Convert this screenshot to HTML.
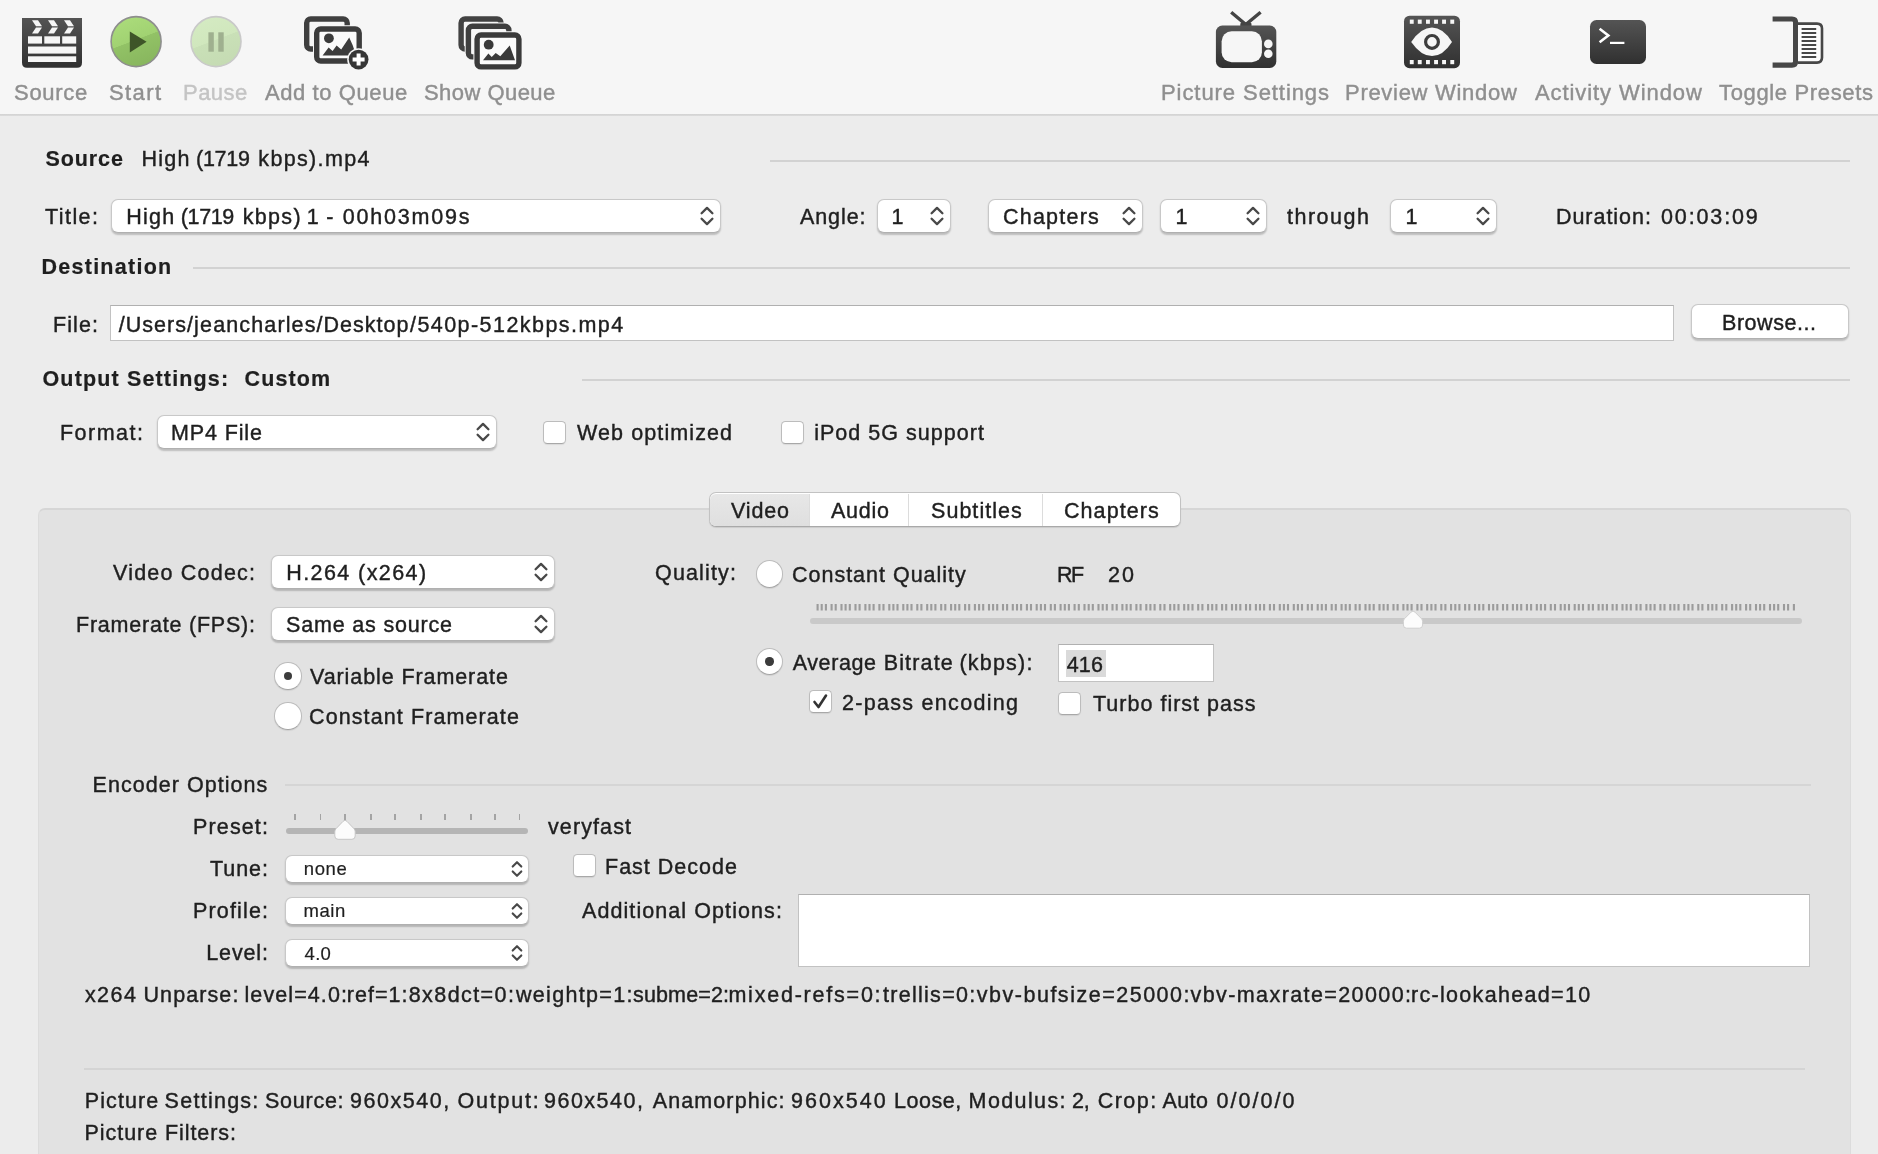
<!DOCTYPE html>
<html><head><meta charset=utf-8><title>HandBrake</title><style>
html,body{margin:0;padding:0;width:1878px;height:1154px;overflow:hidden}
body{width:1878px;height:1154px;overflow:hidden;background:#ececec;position:relative;font-family:"Liberation Sans", sans-serif;color:#1f1f1f}
#clip{position:absolute;left:0;top:0;width:1878px;height:1154px;overflow:hidden}
#w{position:absolute;left:-8px;top:-8px;width:1894px;height:1170px;overflow:hidden;background:#ececec;filter:blur(0.5px)}
#c{position:absolute;left:8px;top:8px;width:1878px;height:1154px}
.abs{position:absolute}
.t{position:absolute;white-space:pre;-webkit-text-stroke:0.42px currentColor}
.pop{position:absolute;box-sizing:border-box;background:#fff;border:1.4px solid #c8c8c8;border-bottom-color:#b0b0b0;border-radius:7px;box-shadow:0 1.2px 1.6px rgba(0,0,0,.2)}
.tf{position:absolute;box-sizing:border-box;background:#fff;border:1.8px solid #c2c2c2;border-top-color:#b0b0b0}
.cb{position:absolute;box-sizing:border-box;width:23px;height:23px;background:#fff;border:1px solid #bcbcbc;border-bottom-color:#a8a8a8;border-radius:4.5px;box-shadow:0 1px 1px rgba(0,0,0,.08)}
.rd{position:absolute;box-sizing:border-box;width:27.4px;height:27.4px;background:#fff;border:1px solid #bcbcbc;border-bottom-color:#a6a6a6;border-radius:50%;box-shadow:0 1px 1px rgba(0,0,0,.08)}
.seg{position:absolute;box-sizing:border-box;background:#fff;border:1px solid #c2c2c2;border-bottom-color:#a9a9a9;border-radius:7px;box-shadow:0 1px 1px rgba(0,0,0,.10)}
</style></head><body><div id=clip><div id=w><div id=c>
<div class=abs style='left:-8px;top:-8px;width:1894px;height:122.5px;background:#f6f6f6'></div>
<div class=abs style='left:-8px;top:114px;width:1894px;height:2px;background:linear-gradient(#d2d2d2,#dcdcdc)'></div>
<div class=abs style='left:770px;top:160px;width:1080px;height:2px;background:#d2d2d2'></div>
<div class=abs style='left:193px;top:267px;width:1657px;height:2px;background:#d2d2d2'></div>
<div class=abs style='left:582px;top:379px;width:1268px;height:2px;background:#d2d2d2'></div>
<div class=abs style='left:38px;top:507.5px;width:1812.5px;height:700px;background:#e2e2e2;border:1.8px solid #dcdcdc;border-top:2.2px solid #d6d6d6;border-radius:7px;box-sizing:border-box'></div>
<div class=pop style='left:111px;top:199px;width:610px;height:33.80000000000001px'></div>
<svg class=abs style='left:698.7px;top:203.8px' width=16 height=24 viewBox='0 0 16 24'><path d='M2.6 9.3 L8 3.9 L13.4 9.3 M2.6 14.7 L8 20.1 L13.4 14.7' fill=none stroke='#484848' stroke-width=2.3 stroke-linecap=round stroke-linejoin=round /></svg>
<div class=pop style='left:877px;top:199px;width:74px;height:33.80000000000001px'></div>
<svg class=abs style='left:928.7px;top:203.8px' width=16 height=24 viewBox='0 0 16 24'><path d='M2.6 9.3 L8 3.9 L13.4 9.3 M2.6 14.7 L8 20.1 L13.4 14.7' fill=none stroke='#484848' stroke-width=2.3 stroke-linecap=round stroke-linejoin=round /></svg>
<div class=pop style='left:988px;top:199px;width:155px;height:33.80000000000001px'></div>
<svg class=abs style='left:1120.7px;top:203.8px' width=16 height=24 viewBox='0 0 16 24'><path d='M2.6 9.3 L8 3.9 L13.4 9.3 M2.6 14.7 L8 20.1 L13.4 14.7' fill=none stroke='#484848' stroke-width=2.3 stroke-linecap=round stroke-linejoin=round /></svg>
<div class=pop style='left:1160px;top:199px;width:107px;height:33.80000000000001px'></div>
<svg class=abs style='left:1244.7px;top:203.8px' width=16 height=24 viewBox='0 0 16 24'><path d='M2.6 9.3 L8 3.9 L13.4 9.3 M2.6 14.7 L8 20.1 L13.4 14.7' fill=none stroke='#484848' stroke-width=2.3 stroke-linecap=round stroke-linejoin=round /></svg>
<div class=pop style='left:1390px;top:199px;width:107px;height:33.80000000000001px'></div>
<svg class=abs style='left:1474.7px;top:203.8px' width=16 height=24 viewBox='0 0 16 24'><path d='M2.6 9.3 L8 3.9 L13.4 9.3 M2.6 14.7 L8 20.1 L13.4 14.7' fill=none stroke='#484848' stroke-width=2.3 stroke-linecap=round stroke-linejoin=round /></svg>
<div class=tf style='left:109.6px;top:304.6px;width:1564px;height:36.8px'></div>
<div class=pop style='left:1690.7px;top:304.4px;width:158.4px;height:34.4px'></div>
<div class=pop style='left:157px;top:415px;width:340px;height:33.80000000000001px'></div>
<svg class=abs style='left:474.7px;top:419.79999999999995px' width=16 height=24 viewBox='0 0 16 24'><path d='M2.6 9.3 L8 3.9 L13.4 9.3 M2.6 14.7 L8 20.1 L13.4 14.7' fill=none stroke='#484848' stroke-width=2.3 stroke-linecap=round stroke-linejoin=round /></svg>
<div class=cb style='left:542.8px;top:420.6px'></div>
<div class=cb style='left:780.5px;top:420.6px'></div>
<div class=seg style='left:709.2px;top:492.3px;width:472px;height:34.4px'></div>
<div class=abs style='left:710.4px;top:493.5px;width:99px;height:32px;background:linear-gradient(#e7e7e7,#dfdfdf);border-radius:6px 0 0 6px'></div>
<div class=abs style='left:808.6px;top:493.5px;width:1.5px;height:32.5px;background:#dcdcdc'></div>
<div class=abs style='left:907.8px;top:493.5px;width:1.5px;height:32.5px;background:#dcdcdc'></div>
<div class=abs style='left:1041.8px;top:493.5px;width:1.5px;height:32.5px;background:#dcdcdc'></div>
<div class=pop style='left:271px;top:555px;width:284px;height:33.799999999999955px'></div>
<svg class=abs style='left:532.7px;top:559.8px' width=16 height=24 viewBox='0 0 16 24'><path d='M2.6 9.3 L8 3.9 L13.4 9.3 M2.6 14.7 L8 20.1 L13.4 14.7' fill=none stroke='#484848' stroke-width=2.3 stroke-linecap=round stroke-linejoin=round /></svg>
<div class=pop style='left:271px;top:607px;width:284px;height:33.799999999999955px'></div>
<svg class=abs style='left:532.7px;top:611.8px' width=16 height=24 viewBox='0 0 16 24'><path d='M2.6 9.3 L8 3.9 L13.4 9.3 M2.6 14.7 L8 20.1 L13.4 14.7' fill=none stroke='#484848' stroke-width=2.3 stroke-linecap=round stroke-linejoin=round /></svg>
<div class=rd style='left:274.4px;top:662.4px'></div>
<div class=abs style='left:283.9px;top:671.9px;width:8.4px;height:8.4px;border-radius:50%;background:#3c3c3c'></div>
<div class=rd style='left:274.4px;top:702.4px'></div>
<div class=rd style='left:755.9px;top:560.4px'></div>
<div class=rd style='left:755.9px;top:647.9px'></div>
<div class=abs style='left:765.4px;top:657.4px;width:8.4px;height:8.4px;border-radius:50%;background:#3c3c3c'></div>
<svg class=abs style='left:810px;top:603.7px' width=1000 height=7 viewBox='0 0 1000 7'><path d='M7.6 0v6.4M11.7 0v6.4M15.9 0v6.4M21.6 0v6.4M25.7 0v6.4M31.5 0v6.4M35.6 0v6.4M39.8 0v6.4M45.5 0v6.4M49.6 0v6.4M55.4 0v6.4M59.5 0v6.4M63.6 0v6.4M69.4 0v6.4M73.5 0v6.4M79.3 0v6.4M83.4 0v6.4M87.5 0v6.4M93.3 0v6.4M97.4 0v6.4M101.5 0v6.4M107.3 0v6.4M111.4 0v6.4M117.2 0v6.4M121.3 0v6.4M125.4 0v6.4M131.2 0v6.4M135.3 0v6.4M141.1 0v6.4M145.2 0v6.4M149.3 0v6.4M155.1 0v6.4M159.2 0v6.4M164.9 0v6.4M169.1 0v6.4M173.2 0v6.4M179.0 0v6.4M183.1 0v6.4M187.2 0v6.4M193.0 0v6.4M197.1 0v6.4M202.8 0v6.4M207.0 0v6.4M211.1 0v6.4M216.9 0v6.4M221.0 0v6.4M226.7 0v6.4M230.9 0v6.4M235.0 0v6.4M240.8 0v6.4M244.9 0v6.4M250.6 0v6.4M254.8 0v6.4M258.9 0v6.4M264.6 0v6.4M268.8 0v6.4M274.5 0v6.4M278.7 0v6.4M282.8 0v6.4M288.5 0v6.4M292.7 0v6.4M296.8 0v6.4M302.5 0v6.4M306.7 0v6.4M312.4 0v6.4M316.6 0v6.4M320.7 0v6.4M326.4 0v6.4M330.6 0v6.4M336.3 0v6.4M340.4 0v6.4M344.6 0v6.4M350.3 0v6.4M354.5 0v6.4M360.2 0v6.4M364.3 0v6.4M368.5 0v6.4M374.2 0v6.4M378.3 0v6.4M382.5 0v6.4M388.2 0v6.4M392.4 0v6.4M398.1 0v6.4M402.2 0v6.4M406.4 0v6.4M412.1 0v6.4M416.2 0v6.4M422.0 0v6.4M426.1 0v6.4M430.3 0v6.4M436.0 0v6.4M440.1 0v6.4M445.9 0v6.4M450.0 0v6.4M454.1 0v6.4M459.9 0v6.4M464.0 0v6.4M469.8 0v6.4M473.9 0v6.4M478.0 0v6.4M483.8 0v6.4M487.9 0v6.4M492.0 0v6.4M497.8 0v6.4M501.9 0v6.4M507.7 0v6.4M511.8 0v6.4M515.9 0v6.4M521.7 0v6.4M525.8 0v6.4M531.6 0v6.4M535.7 0v6.4M539.8 0v6.4M545.6 0v6.4M549.7 0v6.4M555.5 0v6.4M559.6 0v6.4M563.7 0v6.4M569.5 0v6.4M573.6 0v6.4M577.7 0v6.4M583.5 0v6.4M587.6 0v6.4M593.4 0v6.4M597.5 0v6.4M601.6 0v6.4M607.4 0v6.4M611.5 0v6.4M617.2 0v6.4M621.4 0v6.4M625.5 0v6.4M631.3 0v6.4M635.4 0v6.4M641.1 0v6.4M645.3 0v6.4M649.4 0v6.4M655.1 0v6.4M659.3 0v6.4M665.0 0v6.4M669.2 0v6.4M673.3 0v6.4M679.0 0v6.4M683.2 0v6.4M687.3 0v6.4M693.0 0v6.4M697.2 0v6.4M702.9 0v6.4M707.1 0v6.4M711.2 0v6.4M716.9 0v6.4M721.1 0v6.4M726.8 0v6.4M730.9 0v6.4M735.1 0v6.4M740.8 0v6.4M745.0 0v6.4M750.7 0v6.4M754.8 0v6.4M759.0 0v6.4M764.7 0v6.4M768.8 0v6.4M773.0 0v6.4M778.7 0v6.4M782.9 0v6.4M788.6 0v6.4M792.7 0v6.4M796.9 0v6.4M802.6 0v6.4M806.7 0v6.4M812.5 0v6.4M816.6 0v6.4M820.8 0v6.4M826.5 0v6.4M830.6 0v6.4M836.4 0v6.4M840.5 0v6.4M844.6 0v6.4M850.4 0v6.4M854.5 0v6.4M860.3 0v6.4M864.4 0v6.4M868.5 0v6.4M874.3 0v6.4M878.4 0v6.4M882.5 0v6.4M888.3 0v6.4M892.4 0v6.4M898.2 0v6.4M902.3 0v6.4M906.4 0v6.4M912.2 0v6.4M916.3 0v6.4M922.1 0v6.4M926.2 0v6.4M930.3 0v6.4M936.1 0v6.4M940.2 0v6.4M946.0 0v6.4M950.1 0v6.4M954.2 0v6.4M960.0 0v6.4M964.1 0v6.4M968.2 0v6.4M974.0 0v6.4M978.1 0v6.4M983.9 0v6.4' stroke='#9b9b9b' stroke-width=2.1 fill=none /></svg>
<div class=abs style='left:810.4px;top:618.4px;width:991.6px;height:5.6px;border-radius:3px;background:#c9c9c9'></div>
<svg class=abs style='left:1399.2px;top:606px' width=28 height=26 viewBox='0 0 28 26'><path d='M14 5.2 Q15 5.2 16 6.2 L22.4 12.6 Q23.6 13.8 23.6 15.5 L23.6 19 Q23.6 22.2 20.4 22.2 L7.6 22.2 Q4.4 22.2 4.4 19 L4.4 15.5 Q4.4 13.8 5.6 12.6 L12 6.2 Q13 5.2 14 5.2 Z' fill='#fcfcfc' stroke='#cfcfcf' stroke-width=1 /></svg>
<div class=tf style='left:1058px;top:644.4px;width:155.5px;height:37.2px'></div>
<div class=abs style='left:1066.2px;top:650.2px;width:39.6px;height:27.3px;background:#dadada'></div>
<div class=cb style='left:809px;top:690px'></div>
<svg class=abs style='left:809px;top:690px' width=23 height=23 viewBox='0 0 23 23'><path d='M5.5 12 L9.5 17 L17 5.5' fill=none stroke='#333' stroke-width=2.6 stroke-linecap=round stroke-linejoin=round /></svg>
<div class=cb style='left:1058.4px;top:692.4px'></div>
<div class=abs style='left:285px;top:784.4px;width:1525.5px;height:2px;background:#d5d5d5'></div>
<div class=abs style='left:293.9px;top:813.8px;width:1.7px;height:6px;background:#a4a4a4'></div><div class=abs style='left:319.8px;top:813.8px;width:1.7px;height:6px;background:#a4a4a4'></div><div class=abs style='left:344.1px;top:813.8px;width:1.7px;height:6px;background:#a4a4a4'></div><div class=abs style='left:370.0px;top:813.8px;width:1.7px;height:6px;background:#a4a4a4'></div><div class=abs style='left:394.2px;top:813.8px;width:1.7px;height:6px;background:#a4a4a4'></div><div class=abs style='left:419.9px;top:813.8px;width:1.7px;height:6px;background:#a4a4a4'></div><div class=abs style='left:444.2px;top:813.8px;width:1.7px;height:6px;background:#a4a4a4'></div><div class=abs style='left:469.9px;top:813.8px;width:1.7px;height:6px;background:#a4a4a4'></div><div class=abs style='left:494.2px;top:813.8px;width:1.7px;height:6px;background:#a4a4a4'></div><div class=abs style='left:518.5px;top:813.8px;width:1.7px;height:6px;background:#a4a4a4'></div>
<div class=abs style='left:286.2px;top:828.3px;width:241.8px;height:5.7px;border-radius:3px;background:#b5b5b5'></div>
<svg class=abs style='left:331px;top:815px' width=28 height=28 viewBox='0 0 28 28'><path d='M14 5.4 Q15 5.4 16 6.4 L22.9 13.6 Q24.2 15 24.2 16.8 L24.2 21 Q24.2 24.3 20.9 24.3 L7.1 24.3 Q3.8 24.3 3.8 21 L3.8 16.8 Q3.8 15 5.1 13.6 L12 6.4 Q13 5.4 14 5.4 Z' fill='#fcfcfc' stroke='#c6c6c6' stroke-width=1 /></svg>
<div class=pop style='left:285.2px;top:854.8px;width:243.40000000000003px;height:28.399999999999977px'></div>
<svg class=abs style='left:508.6px;top:857.2px' width=16 height=24 viewBox='0 0 16 24'><path d='M3.7 9.6 L8 5.2 L12.3 9.6 M3.7 14.4 L8 18.8 L12.3 14.4' fill=none stroke='#484848' stroke-width=2.1 stroke-linecap=round stroke-linejoin=round /></svg>
<div class=pop style='left:285.2px;top:896.8px;width:243.40000000000003px;height:28.399999999999977px'></div>
<svg class=abs style='left:508.6px;top:899.2px' width=16 height=24 viewBox='0 0 16 24'><path d='M3.7 9.6 L8 5.2 L12.3 9.6 M3.7 14.4 L8 18.8 L12.3 14.4' fill=none stroke='#484848' stroke-width=2.1 stroke-linecap=round stroke-linejoin=round /></svg>
<div class=pop style='left:285.2px;top:938.8px;width:243.40000000000003px;height:28.399999999999977px'></div>
<svg class=abs style='left:508.6px;top:941.2px' width=16 height=24 viewBox='0 0 16 24'><path d='M3.7 9.6 L8 5.2 L12.3 9.6 M3.7 14.4 L8 18.8 L12.3 14.4' fill=none stroke='#484848' stroke-width=2.1 stroke-linecap=round stroke-linejoin=round /></svg>
<div class=cb style='left:572.5px;top:854.2px'></div>
<div class=tf style='left:798px;top:894px;width:1012px;height:73px'></div>
<div class=abs style='left:84px;top:1068.4px;width:1721px;height:2px;background:#d4d4d4'></div>
<svg class=abs style="left:0;top:0" width="1878" height="80" viewBox="0 0 1878 80">
<defs>
<linearGradient id="dk" x1="0" y1="0" x2="0" y2="1"><stop offset="0" stop-color="#545454"/><stop offset="1" stop-color="#303030"/></linearGradient>
<linearGradient id="gr" x1="0.322" y1="0.033" x2="0.678" y2="0.967"><stop offset="0" stop-color="#aadb7a"/><stop offset="0.46" stop-color="#a1d272"/><stop offset="0.47" stop-color="#92c266"/><stop offset="1" stop-color="#88b65e"/></linearGradient>
<linearGradient id="gp" x1="0.322" y1="0.033" x2="0.678" y2="0.967"><stop offset="0" stop-color="#d4eac2"/><stop offset="0.46" stop-color="#d0e7bd"/><stop offset="0.47" stop-color="#c9e0b7"/><stop offset="1" stop-color="#c5dbb3"/></linearGradient>
</defs>
<!-- clapperboard -->
<g>
<path d="M22 18 H82 V62.8 Q82 67.8 77 67.8 H27 Q22 67.8 22 62.8 Z" fill="url(#dk)"/>
<g fill="#f6f6f6">
<path d="M32 20.3h6l4 6h-6z M36 27.6h6l-4 6h-6z"/>
<path d="M48 20.3h6l4 6h-6z M52 27.6h6l-4 6h-6z"/>
<path d="M64 20.3h6l4 6h-6z M68 27.6h6l-4 6h-6z"/>
<rect x="28" y="36.3" width="14" height="7.3"/><rect x="44.3" y="36.3" width="15.7" height="7.3"/><rect x="62.2" y="36.3" width="14" height="7.3"/>
<rect x="28" y="46.5" width="48.2" height="7.1"/>
<rect x="28" y="56.3" width="48.2" height="5.7"/>
</g>
</g>
<!-- start -->
<circle cx="136.1" cy="41.6" r="25" fill="url(#gr)" stroke="#8e8e8e" stroke-width="1.6"/>
<path d="M129.8 31.4 L146.6 41.7 L129.8 52.4 Z" fill="#3e5528"/>
<!-- pause -->
<circle cx="216" cy="41.6" r="25" fill="url(#gp)" stroke="#c9c9c9" stroke-width="1.6"/>
<rect x="208.4" y="32.3" width="5.4" height="19.4" fill="#9fb08f"/><rect x="218.3" y="32.3" width="5.4" height="19.4" fill="#9fb08f"/>
<!-- add to queue -->
<g fill="none" stroke="#3f3f3f" stroke-width="5.4">
<rect x="306.7" y="19" width="40.5" height="30" rx="4"/>
</g>
<rect x="313" y="25.3" width="50" height="39.4" rx="7" fill="#f6f6f6"/>
<rect x="316.7" y="29" width="42.5" height="32" rx="4" fill="#fbfbfb" stroke="#3c3c3c" stroke-width="5.4"/>
<circle cx="328.9" cy="38.3" r="4.9" fill="#3c3c3c"/>
<path d="M322.6 55.4 L328.6 47.6 L332.6 51 L336.6 45.6 L341.2 49.6 L349.2 37.6 L352.6 45 L356.2 55.4 Z" fill="#3c3c3c"/>
<circle cx="358.6" cy="59.6" r="11.4" fill="#f6f6f6"/>
<circle cx="358.6" cy="59.6" r="9.9" fill="#363636"/>
<path d="M352.6 59.6 H364.6 M358.6 53.6 V65.6" stroke="#fff" stroke-width="4" fill="none"/>
<!-- show queue -->
<rect x="461.1" y="19" width="40" height="30" rx="4" fill="none" stroke="#424242" stroke-width="5.4"/>
<rect x="464.7" y="22.6" width="48" height="38" rx="7" fill="#f6f6f6"/>
<rect x="468.4" y="26.3" width="40.5" height="30.6" rx="4" fill="#f6f6f6" stroke="#3f3f3f" stroke-width="5.4"/>
<rect x="473.4" y="31.3" width="49.3" height="39.3" rx="7" fill="#f6f6f6"/>
<rect x="477.1" y="35" width="41.8" height="31.9" rx="4" fill="#fbfbfb" stroke="#3a3a3a" stroke-width="5.4"/>
<circle cx="488.7" cy="44.7" r="4.9" fill="#3a3a3a"/>
<path d="M483 60.3 L488.4 53.6 L491.7 57 L495.7 53 L500.3 56.3 L509.7 45.6 L515 60.3 Z" fill="#3a3a3a"/>
<!-- picture settings (tv) -->
<path d="M1245.8 24.5 L1231.2 12.2 M1245.8 24.5 L1260.6 12.2" stroke="#444" stroke-width="3.4" fill="none"/>
<rect x="1240.3" y="22.4" width="11.2" height="5" rx="1.5" fill="#444"/>
<rect x="1215.9" y="25.6" width="60.4" height="42.3" rx="6.5" fill="url(#dk)"/>
<rect x="1221.6" y="31.2" width="40.3" height="31.1" rx="10" fill="#f6f6f6"/>
<circle cx="1268.3" cy="43.9" r="4.3" fill="#f6f6f6"/><circle cx="1268.3" cy="53.8" r="4.3" fill="#f6f6f6"/>
<!-- preview window -->
<rect x="1404" y="15.7" width="56" height="52.5" rx="5.5" fill="url(#dk)"/>
<g fill="#f6f6f6">
<rect x="1409.8" y="19.6" width="3.9" height="4.2"/><rect x="1417.8" y="19.6" width="3.9" height="4.2"/><rect x="1426" y="19.6" width="3.9" height="4.2"/><rect x="1434.1" y="19.6" width="3.9" height="4.2"/><rect x="1442.1" y="19.6" width="3.9" height="4.2"/><rect x="1450.3" y="19.6" width="3.9" height="4.2"/>
<rect x="1409.8" y="60" width="3.9" height="4.2"/><rect x="1417.8" y="60" width="3.9" height="4.2"/><rect x="1426" y="60" width="3.9" height="4.2"/><rect x="1434.1" y="60" width="3.9" height="4.2"/><rect x="1442.1" y="60" width="3.9" height="4.2"/><rect x="1450.3" y="60" width="3.9" height="4.2"/>
<path d="M1411.2 41.9 Q1421 27.5 1432 27.5 Q1443 27.5 1452 41.9 Q1443 56 1432 56 Q1421 56 1411.2 41.9 Z"/>
</g>
<circle cx="1432" cy="41.9" r="6.4" fill="#f6f6f6" stroke="#3d3d3d" stroke-width="3.2"/>
<!-- activity window -->
<rect x="1590" y="20" width="56" height="44" rx="6.5" fill="url(#dk)"/>
<path d="M1599.6 28.8 L1608.3 35.6 L1599.6 42.3" fill="none" stroke="#fff" stroke-width="2.6"/>
<rect x="1610" y="41.8" width="14.4" height="2.2" fill="#fff"/>
<!-- toggle presets -->
<path d="M1772.6 19 H1792 Q1795.6 19 1795.6 22.6 V61.6 Q1795.6 65.2 1792 65.2 H1772.6" fill="none" stroke="#474747" stroke-width="5.2"/>
<path d="M1798 23.6 H1817 Q1822 23.6 1822 28.6 V57.6 Q1822 62.6 1817 62.6 H1798" fill="#fbfbfb" stroke="#474747" stroke-width="2.6"/>
<path d="M1801.6 29.1h14.6 M1801.6 33.1h14.6 M1801.6 37.1h14.6 M1801.6 41.1h14.6 M1801.6 45h14.6 M1801.6 49h14.6 M1801.6 53h14.6 M1801.6 57h14.6" stroke="#474747" stroke-width="2"/>
</svg>

<span class=t style="left:14.0px;top:78.3px;font-size:22px;line-height:29px;letter-spacing:0.71px;color:#8f8f8f;">Source</span>
<span class=t style="left:109.0px;top:78.3px;font-size:22px;line-height:29px;letter-spacing:1.41px;color:#8f8f8f;">Start</span>
<span class=t style="left:183.0px;top:78.3px;font-size:22px;line-height:29px;letter-spacing:0.46px;color:#c4c4c4;">Pause</span>
<span class=t style="left:265.0px;top:78.3px;font-size:22px;line-height:29px;letter-spacing:0.59px;color:#8f8f8f;">Add to Queue</span>
<span class=t style="left:424.0px;top:78.3px;font-size:22px;line-height:29px;letter-spacing:0.45px;color:#8f8f8f;">Show Queue</span>
<span class=t style="left:1161.0px;top:78.3px;font-size:22px;line-height:29px;letter-spacing:0.93px;color:#8f8f8f;">Picture Settings</span>
<span class=t style="left:1345.0px;top:78.3px;font-size:22px;line-height:29px;letter-spacing:0.71px;color:#8f8f8f;">Preview Window</span>
<span class=t style="left:1535.0px;top:78.3px;font-size:22px;line-height:29px;letter-spacing:0.92px;color:#8f8f8f;">Activity Window</span>
<span class=t style="left:1719.0px;top:78.3px;font-size:22px;line-height:29px;letter-spacing:0.65px;color:#8f8f8f;">Toggle Presets</span>
<span class=t style="left:45.5px;top:144.5px;font-size:21.5px;line-height:28px;letter-spacing:0.91px;-webkit-text-stroke:0.2px currentColor;font-weight:700;">Source</span>
<span class=t style="left:141.5px;top:144.5px;font-size:21.5px;line-height:28px;letter-spacing:1.25px;">High</span>
<span class=t style="left:196.0px;top:144.5px;font-size:21.5px;line-height:28px;letter-spacing:-0.28px;">(1719</span>
<span class=t style="left:258.3px;top:144.5px;font-size:21.5px;line-height:28px;letter-spacing:1.35px;">kbps).mp4</span>
<span class=t style="left:45.0px;top:202.7px;font-size:21.5px;line-height:28px;letter-spacing:1.44px;">Title:</span>
<span class=t style="left:126.3px;top:202.7px;font-size:21.5px;line-height:28px;letter-spacing:1.25px;">High</span>
<span class=t style="left:180.8px;top:202.7px;font-size:21.5px;line-height:28px;letter-spacing:-0.38px;">(1719</span>
<span class=t style="left:242.7px;top:202.7px;font-size:21.5px;line-height:28px;letter-spacing:1.32px;">kbps)</span>
<span class=t style="left:306.8px;top:202.7px;font-size:21.5px;line-height:28px;">1</span>
<span class=t style="left:326.2px;top:202.7px;font-size:21.5px;line-height:28px;">-</span>
<span class=t style="left:342.7px;top:202.7px;font-size:21.5px;line-height:28px;letter-spacing:1.81px;">00h03m09s</span>
<span class=t style="left:800.0px;top:202.7px;font-size:21.5px;line-height:28px;letter-spacing:0.90px;">Angle:</span>
<span class=t style="left:891.5px;top:202.7px;font-size:21.5px;line-height:28px;">1</span>
<span class=t style="left:1003.0px;top:202.7px;font-size:21.5px;line-height:28px;letter-spacing:1.22px;">Chapters</span>
<span class=t style="left:1175.5px;top:202.7px;font-size:21.5px;line-height:28px;">1</span>
<span class=t style="left:1287.0px;top:202.7px;font-size:21.5px;line-height:28px;letter-spacing:1.51px;">through</span>
<span class=t style="left:1405.5px;top:202.7px;font-size:21.5px;line-height:28px;">1</span>
<span class=t style="left:1555.9px;top:202.7px;font-size:21.5px;line-height:28px;letter-spacing:0.98px;">Duration:</span>
<span class=t style="left:1661.0px;top:202.7px;font-size:21.5px;line-height:28px;letter-spacing:1.87px;">00:03:09</span>
<span class=t style="left:41.5px;top:252.5px;font-size:21.5px;line-height:28px;letter-spacing:1.26px;-webkit-text-stroke:0.2px currentColor;font-weight:700;">Destination</span>
<span class=t style="left:53.0px;top:310.5px;font-size:21.5px;line-height:28px;letter-spacing:1.09px;">File:</span>
<span class=t style="left:118.7px;top:310.5px;font-size:21.5px;line-height:28px;letter-spacing:1.03px;">/Users</span>
<span class=t style="left:187.0px;top:310.5px;font-size:21.5px;line-height:28px;letter-spacing:1.14px;">/jeancharles</span>
<span class=t style="left:316.4px;top:310.5px;font-size:21.5px;line-height:28px;letter-spacing:1.02px;">/Desktop</span>
<span class=t style="left:410.0px;top:310.5px;font-size:21.5px;line-height:28px;letter-spacing:1.44px;">/540p-512kbps.mp4</span>
<span class=t style="left:1722.0px;top:309.0px;font-size:21.5px;line-height:28px;letter-spacing:0.55px;">Browse...</span>
<span class=t style="left:42.5px;top:364.5px;font-size:21.5px;line-height:28px;letter-spacing:1.15px;-webkit-text-stroke:0.2px currentColor;font-weight:700;">Output Settings:</span>
<span class=t style="left:244.5px;top:364.5px;font-size:21.5px;line-height:28px;letter-spacing:1.12px;-webkit-text-stroke:0.2px currentColor;font-weight:700;">Custom</span>
<span class=t style="left:60.0px;top:418.5px;font-size:21.5px;line-height:28px;letter-spacing:1.48px;">Format:</span>
<span class=t style="left:171.0px;top:418.5px;font-size:21.5px;line-height:28px;letter-spacing:0.88px;">MP4 File</span>
<span class=t style="left:577.0px;top:418.5px;font-size:21.5px;line-height:28px;letter-spacing:1.10px;">Web optimized</span>
<span class=t style="left:814.2px;top:418.6px;font-size:21.5px;line-height:28px;letter-spacing:1.03px;">iPod 5G support</span>
<span class=t style="left:731.0px;top:496.5px;font-size:21.5px;line-height:28px;letter-spacing:0.84px;">Video</span>
<span class=t style="left:831.0px;top:496.5px;font-size:21.5px;line-height:28px;letter-spacing:0.74px;">Audio</span>
<span class=t style="left:931.0px;top:496.5px;font-size:21.5px;line-height:28px;letter-spacing:1.04px;">Subtitles</span>
<span class=t style="left:1064.0px;top:496.5px;font-size:21.5px;line-height:28px;letter-spacing:1.07px;">Chapters</span>
<span class=t style="left:113.0px;top:558.5px;font-size:21.5px;line-height:28px;letter-spacing:1.21px;">Video Codec:</span>
<span class=t style="left:286.2px;top:558.5px;font-size:21.5px;line-height:28px;letter-spacing:1.42px;">H.264 (x264)</span>
<span class=t style="left:76.0px;top:610.5px;font-size:21.5px;line-height:28px;letter-spacing:0.78px;">Framerate (FPS):</span>
<span class=t style="left:286.0px;top:610.5px;font-size:21.5px;line-height:28px;letter-spacing:0.82px;">Same as source</span>
<span class=t style="left:310.0px;top:662.5px;font-size:21.5px;line-height:28px;letter-spacing:0.91px;">Variable Framerate</span>
<span class=t style="left:309.0px;top:702.5px;font-size:21.5px;line-height:28px;letter-spacing:1.10px;">Constant Framerate</span>
<span class=t style="left:655.0px;top:558.5px;font-size:21.5px;line-height:28px;letter-spacing:1.16px;">Quality:</span>
<span class=t style="left:792.0px;top:560.5px;font-size:21.5px;line-height:28px;letter-spacing:0.99px;">Constant Quality</span>
<span class=t style="left:1057.0px;top:560.5px;font-size:21.5px;line-height:28px;letter-spacing:-1.50px;">RF</span>
<span class=t style="left:1108.0px;top:560.5px;font-size:21.5px;line-height:28px;letter-spacing:2.04px;">20</span>
<span class=t style="left:792.7px;top:648.7px;font-size:21.5px;line-height:28px;letter-spacing:0.61px;">Average</span>
<span class=t style="left:883.7px;top:648.7px;font-size:21.5px;line-height:28px;letter-spacing:1.15px;">Bitrate</span>
<span class=t style="left:959.4px;top:648.7px;font-size:21.5px;line-height:28px;letter-spacing:1.21px;">(kbps):</span>
<span class=t style="left:1066.8px;top:650.5px;font-size:21.5px;line-height:28px;letter-spacing:0.09px;">416</span>
<span class=t style="left:842.0px;top:688.5px;font-size:21.5px;line-height:28px;letter-spacing:1.30px;">2-pass encoding</span>
<span class=t style="left:1093.0px;top:690.2px;font-size:21.5px;line-height:28px;letter-spacing:1.01px;">Turbo first pass</span>
<span class=t style="left:92.6px;top:770.5px;font-size:21.5px;line-height:28px;letter-spacing:1.04px;">Encoder Options</span>
<span class=t style="left:193.0px;top:812.5px;font-size:21.5px;line-height:28px;letter-spacing:1.14px;">Preset:</span>
<span class=t style="left:548.0px;top:812.5px;font-size:21.5px;line-height:28px;letter-spacing:1.10px;">veryfast</span>
<span class=t style="left:210.0px;top:854.5px;font-size:21.5px;line-height:28px;letter-spacing:0.95px;">Tune:</span>
<span class=t style="left:303.8px;top:857.4px;font-size:18.5px;line-height:24px;letter-spacing:0.61px;-webkit-text-stroke:0.2px currentColor;">none</span>
<span class=t style="left:605.0px;top:852.5px;font-size:21.5px;line-height:28px;letter-spacing:1.01px;">Fast Decode</span>
<span class=t style="left:193.0px;top:896.5px;font-size:21.5px;line-height:28px;letter-spacing:1.15px;">Profile:</span>
<span class=t style="left:303.6px;top:899.4px;font-size:18.5px;line-height:24px;letter-spacing:0.50px;-webkit-text-stroke:0.2px currentColor;">main</span>
<span class=t style="left:582.0px;top:896.5px;font-size:21.5px;line-height:28px;letter-spacing:1.08px;">Additional Options:</span>
<span class=t style="left:206.3px;top:938.6px;font-size:21.5px;line-height:28px;letter-spacing:0.86px;">Level:</span>
<span class=t style="left:304.6px;top:941.6px;font-size:18.5px;line-height:24px;letter-spacing:0.29px;-webkit-text-stroke:0.2px currentColor;">4.0</span>
<span class=t style="left:84.9px;top:980.5px;font-size:21.5px;line-height:28px;letter-spacing:1.48px;">x264</span>
<span class=t style="left:143.5px;top:980.5px;font-size:21.5px;line-height:28px;letter-spacing:1.09px;">Unparse:</span>
<span class=t style="left:244.5px;top:980.5px;font-size:21.5px;line-height:28px;letter-spacing:1.09px;">level=4.0:</span>
<span class=t style="left:346.7px;top:980.5px;font-size:21.5px;line-height:28px;letter-spacing:1.04px;">ref=1:</span>
<span class=t style="left:408.7px;top:980.5px;font-size:21.5px;line-height:28px;letter-spacing:1.43px;">8x8dct=0:</span>
<span class=t style="left:516.0px;top:980.5px;font-size:21.5px;line-height:28px;letter-spacing:1.32px;">weightp=1:</span>
<span class=t style="left:633.0px;top:980.5px;font-size:21.5px;line-height:28px;letter-spacing:0.14px;">subme=2:</span>
<span class=t style="left:728.4px;top:980.5px;font-size:21.5px;line-height:28px;letter-spacing:1.78px;">mixed-refs=0:</span>
<span class=t style="left:883.0px;top:980.5px;font-size:21.5px;line-height:28px;letter-spacing:1.28px;">trellis=0:</span>
<span class=t style="left:976.8px;top:980.5px;font-size:21.5px;line-height:28px;letter-spacing:1.51px;">vbv-bufsize=25000:</span>
<span class=t style="left:1190.6px;top:980.5px;font-size:21.5px;line-height:28px;letter-spacing:1.40px;">vbv-maxrate=20000:</span>
<span class=t style="left:1411.0px;top:980.5px;font-size:21.5px;line-height:28px;letter-spacing:1.31px;">rc-lookahead=10</span>
<span class=t style="left:84.8px;top:1086.5px;font-size:21.5px;line-height:28px;letter-spacing:1.09px;">Picture</span>
<span class=t style="left:164.6px;top:1086.5px;font-size:21.5px;line-height:28px;letter-spacing:1.26px;">Settings:</span>
<span class=t style="left:265.0px;top:1086.5px;font-size:21.5px;line-height:28px;letter-spacing:0.75px;">Source:</span>
<span class=t style="left:350.0px;top:1086.5px;font-size:21.5px;line-height:28px;letter-spacing:1.54px;">960x540,</span>
<span class=t style="left:457.5px;top:1086.5px;font-size:21.5px;line-height:28px;letter-spacing:1.78px;">Output:</span>
<span class=t style="left:544.0px;top:1086.5px;font-size:21.5px;line-height:28px;letter-spacing:1.50px;">960x540,</span>
<span class=t style="left:652.7px;top:1086.5px;font-size:21.5px;line-height:28px;letter-spacing:1.11px;">Anamorphic:</span>
<span class=t style="left:791.0px;top:1086.5px;font-size:21.5px;line-height:28px;letter-spacing:2.03px;">960x540</span>
<span class=t style="left:894.0px;top:1086.5px;font-size:21.5px;line-height:28px;letter-spacing:0.52px;">Loose,</span>
<span class=t style="left:968.6px;top:1086.5px;font-size:21.5px;line-height:28px;letter-spacing:1.39px;">Modulus:</span>
<span class=t style="left:1072.0px;top:1086.5px;font-size:21.5px;line-height:28px;letter-spacing:-0.16px;">2,</span>
<span class=t style="left:1097.7px;top:1086.5px;font-size:21.5px;line-height:28px;letter-spacing:1.50px;">Crop:</span>
<span class=t style="left:1162.5px;top:1086.5px;font-size:21.5px;line-height:28px;letter-spacing:0.41px;">Auto</span>
<span class=t style="left:1216.6px;top:1086.5px;font-size:21.5px;line-height:28px;letter-spacing:2.03px;">0/0/0/0</span>
<span class=t style="left:84.6px;top:1118.5px;font-size:21.5px;line-height:28px;letter-spacing:0.93px;">Picture Filters:</span>
</div></div></div></body></html>
